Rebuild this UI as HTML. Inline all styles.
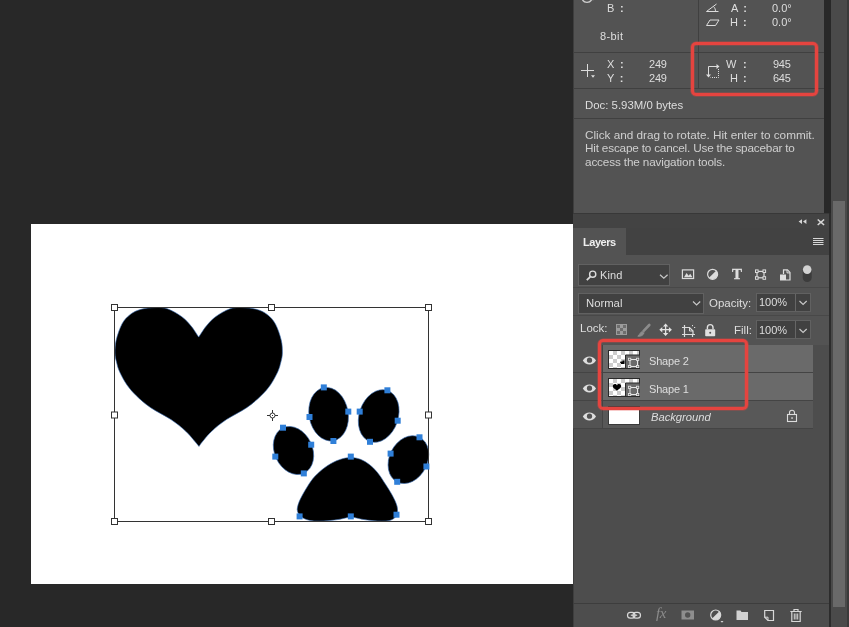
<!DOCTYPE html>
<html lang="en">
<head>
<meta charset="utf-8">
<title>Photoshop - Layers</title>
<style>
*{box-sizing:border-box;margin:0;padding:0}
html,body{width:849px;height:627px;overflow:hidden;background:#282828}
body{position:relative;font-family:"Liberation Sans",sans-serif;font-size:11px;color:#dcdcdc}
.abs{position:absolute}
.t{position:absolute;white-space:nowrap;line-height:13px;height:13px;color:#dedede;margin-top:1px;will-change:transform}
.hl{position:absolute;height:1px;background:#404040}
.vl{position:absolute;width:1px;background:#404040}
#canvas{left:31px;top:224px;width:542px;height:360px;background:#fff}
#info{left:573px;top:0;width:251px;height:213px;background:#535353;box-shadow:inset 1px 0 0 #3e3e3e}
#layers{left:573px;top:213px;width:257px;height:414px;background:#4d4d4d;box-shadow:inset 1px 0 0 #3e3e3e}
.red{position:absolute;z-index:5;border:3px solid #e5443f;border-radius:5px;box-shadow:0 0 0 .6px rgba(229,68,63,.55),inset 0 0 0 .5px rgba(229,68,63,.5)}
.field{position:absolute;background:#414141;border:1px solid #616161}
.row{position:absolute;left:30px;width:210px;height:27px}
.sel{background:#6a6a6a}
</style>
</head>
<body>

<!-- document canvas -->
<div id="canvas" class="abs"></div>
<svg class="abs" style="left:0;top:0" width="573" height="627" viewBox="0 0 573 627">
  <g fill="#000" stroke="#3b6fb5" stroke-width="0.6">
    <path id="heart" d="M198.6 337.0C197.4 335.2 194.1 329.7 191.3 326.3C188.5 322.9 185.8 319.6 181.8 316.7C177.8 313.8 171.9 310.3 167.4 308.8C162.9 307.3 159.4 307.5 155.0 307.6C150.6 307.7 145.1 308.2 141.0 309.3C136.9 310.4 133.5 312.0 130.3 314.4C127.1 316.8 124.3 319.6 122.0 323.9C119.7 328.2 117.4 335.1 116.2 340.0C115.0 344.9 115.0 349.3 115.0 353.0C115.0 356.7 115.7 358.9 116.5 362.0C117.3 365.1 117.8 368.0 119.6 371.8C121.3 375.6 124.2 381.0 127.0 385.0C129.8 389.0 132.4 391.9 136.3 395.7C140.2 399.5 144.9 403.7 150.7 407.7C156.5 411.7 165.1 415.6 171.0 419.6C176.9 423.6 181.3 427.1 186.0 431.6C190.7 436.1 196.8 443.9 199.0 446.4C200.6 443.9 206.7 436.1 211.4 431.6C216.1 427.1 220.5 423.6 226.4 419.6C232.3 415.6 240.9 411.7 246.7 407.7C252.5 403.7 257.1 399.5 261.1 395.7C265.0 391.9 267.6 389.0 270.4 385.0C273.2 381.0 276.0 375.6 277.8 371.8C279.5 368.0 280.1 365.1 280.9 362.0C281.7 358.9 282.3 356.7 282.4 353.0C282.4 349.3 282.4 344.9 281.2 340.0C280.0 335.1 277.8 328.2 275.4 323.9C273.0 319.6 270.3 316.8 267.1 314.4C263.9 312.0 260.5 310.4 256.4 309.3C252.3 308.2 246.8 307.7 242.4 307.6C238.0 307.5 234.5 307.3 230.0 308.8C225.5 310.3 219.6 313.8 215.6 316.7C211.6 319.6 208.9 322.9 206.1 326.3C203.3 329.7 200.0 335.2 198.8 337.0Z"/>
    <ellipse cx="293.5" cy="450.5" rx="19" ry="25" transform="rotate(-25 293.5 450.5)"/>
    <ellipse cx="328.6" cy="414.2" rx="19.6" ry="27" transform="rotate(-10 328.6 414.2)"/>
    <ellipse cx="378.7" cy="416" rx="19.5" ry="27" transform="rotate(18.7 378.7 416)"/>
    <ellipse cx="408.4" cy="459.6" rx="19" ry="25" transform="rotate(26.6 408.4 459.6)"/>
    <path id="pad" d="M351 457.5C364 457.5 376 468 384 482C390 491 395 499 397 506C399 514 396 520.5 386 521C374 521.5 360 519.5 351 516.5C342 519.5 328 521.5 314 521C303 520.5 295.500 514 297.500 507C299 500 304 492 309 484C318 470 336 457.500 351 457.500Z"/>
  </g>
  <!-- transform box -->
  <rect x="114.5" y="307.5" width="314" height="214" fill="none" stroke="#333" stroke-width="1"/>
  <g fill="#fff" stroke="#333" stroke-width="1">
    <rect x="111.5" y="304.5" width="6" height="6"/>
    <rect x="268.5" y="304.5" width="6" height="6"/>
    <rect x="425.5" y="304.5" width="6" height="6"/>
    <rect x="111.5" y="412" width="6" height="6"/>
    <rect x="425.5" y="412" width="6" height="6"/>
    <rect x="111.5" y="518.5" width="6" height="6"/>
    <rect x="268.5" y="518.5" width="6" height="6"/>
    <rect x="425.5" y="518.5" width="6" height="6"/>
  </g>
  <!-- anchor points -->
  <g fill="#2f7fd8">
    <rect x="280" y="424.7" width="6" height="6"/><rect x="308.2" y="441.7" width="6" height="6"/><rect x="300.8" y="470.4" width="6" height="6"/><rect x="272.3" y="453.6" width="6" height="6"/>
    <rect x="320.8" y="384.4" width="6" height="6"/><rect x="345.3" y="408.6" width="6" height="6"/><rect x="330.4" y="438" width="6" height="6"/><rect x="306.5" y="414" width="6" height="6"/>
    <rect x="384.4" y="387.3" width="6" height="6"/><rect x="394.7" y="417.7" width="6" height="6"/><rect x="367" y="438.8" width="6" height="6"/><rect x="356.7" y="408.6" width="6" height="6"/>
    <rect x="416.5" y="434.3" width="6" height="6"/><rect x="423.4" y="463.5" width="6" height="6"/><rect x="394.2" y="478.8" width="6" height="6"/><rect x="387.6" y="450.6" width="6" height="6"/>
    <rect x="347.8" y="453.6" width="6" height="6"/><rect x="296.6" y="513.4" width="6" height="6"/><rect x="347.8" y="513.4" width="6" height="6"/><rect x="393.5" y="511.7" width="6" height="6"/>
  </g>
  <!-- centre reference point -->
  <g stroke="#333" stroke-width="1" fill="none">
    <circle cx="272.5" cy="415.5" r="2.5"/><rect x="272" y="415" width="1" height="1" fill="#333" stroke="none"/>
    <path d="M272.5 410v3M272.5 418v3M267 415.5h3M275 415.5h3"/>
  </g>
</svg>

<!-- INFO PANEL -->
<div id="info" class="abs">
  <div class="vl" style="left:125px;top:0;height:89px"></div>
  <div class="hl" style="left:0;top:52px;width:251px"></div>
  <div class="hl" style="left:0;top:88px;width:251px"></div>
  <div class="hl" style="left:0;top:118px;width:251px"></div>

  <div class="t" style="left:34px;top:1px;word-spacing:2.5px">B <b>:</b></div>
  <div class="t" style="left:27px;top:29px;letter-spacing:0.4px">8-bit</div>
  <div class="t" style="left:158px;top:1px;word-spacing:2.5px">A <b>:</b></div>
  <div class="t" style="left:199px;top:1px">0.0°</div>
  <div class="t" style="left:157px;top:15px;word-spacing:2px">H <b>:</b></div>
  <div class="t" style="left:199px;top:15px">0.0°</div>

  <div class="t" style="left:33.5px;top:57px;word-spacing:2.5px">X <b>:</b></div>
  <div class="t" style="left:75.5px;top:57px;letter-spacing:-0.2px">249</div>
  <div class="t" style="left:33.5px;top:71px;word-spacing:2.5px">Y <b>:</b></div>
  <div class="t" style="left:75.5px;top:71px;letter-spacing:-0.2px">249</div>

  <div class="t" style="left:153px;top:57px;word-spacing:3.5px">W <b>:</b></div>
  <div class="t" style="left:200px;top:57px;letter-spacing:-0.3px">945</div>
  <div class="t" style="left:157px;top:71px;word-spacing:2px">H <b>:</b></div>
  <div class="t" style="left:200px;top:71px;letter-spacing:-0.3px">645</div>

  <div class="t" style="left:11.5px;top:98px;font-size:11.4px">Doc: 5.93M/0 bytes</div>
  <div class="t" style="left:11.5px;top:127px;font-size:11.75px;color:#cfcfcf">Click and drag to rotate. Hit enter to commit.</div>
  <div class="t" style="left:11.5px;top:140.300px;font-size:11.75px;letter-spacing:-0.19px;color:#cfcfcf">Hit escape to cancel. Use the spacebar to</div>
  <div class="t" style="left:11.5px;top:154px;font-size:11.75px;letter-spacing:-0.15px;color:#cfcfcf">access the navigation tools.</div>

  <svg class="abs" style="left:0;top:0" width="251" height="100" viewBox="573 0 251 100" fill="none" stroke="#dcdcdc" stroke-width="1">
    <!-- crosshair -->
    <path d="M587.5 64v13M581 70.500h13"/>
    <path d="M591 75.300h4l-2 2.500z" fill="#dcdcdc" stroke="none"/>
    <path d="M582.500 0a5.500 5.500 0 0 0 9 0M592.500 0l1.500-1.500" stroke="#cfcfcf" stroke-width="1.400" fill="none"/>
    <!-- angle icon -->
    <path d="M706.500 11.500h12M706.500 11.500l10-7.500M713.500 6.500c1.500 1.500 2 3 2 5"/>
    <!-- skew icon -->
    <path d="M706.500 25.500h9l3.500-5.500h-9z"/>
    <!-- transform icon -->
    <path d="M708.500 75v-8.500h8.500" />
    <path d="M716.500 64l3 2.500-3 2.500zM706 74.500h5l-2.500 3z" fill="#dcdcdc" stroke="none"/>
    <path d="M718.500 69v8.500h-8" stroke-dasharray="1 1"/>
  </svg>
</div>
<div class="red" style="left:691px;top:42px;width:127px;height:54px"></div>

<!-- LAYERS PANEL -->
<div id="layers" class="abs">
  <!-- top strip + tab bar -->
  <div class="abs" style="left:0;top:0;width:256px;height:15px;background:#434343"></div>
  <div class="hl" style="left:0;top:0;width:257px;background:#383838"></div>
  <div class="abs" style="left:0;top:15px;width:256px;height:27px;background:#424242"></div>
  <div class="abs" style="left:0;top:15px;width:53px;height:27px;background:#535353"></div>
  <div class="abs" style="left:0;top:42px;width:256px;height:90px;background:#535353"></div>
  <div class="t" style="left:10px;top:22px;font-weight:bold;font-size:11px;letter-spacing:-0.45px;color:#f0f0f0">Layers</div>

  <!-- kind row -->
  <div class="field" style="left:5px;top:51px;width:92px;height:22px"></div>
  <div class="t" style="left:26.5px;top:55px;letter-spacing:0.1px">Kind</div>
  <!-- blend row -->
  <div class="hl" style="left:0;top:74px;width:256px;background:#484848"></div>
  <div class="field" style="left:5px;top:80px;width:126px;height:21px"></div>
  <div class="t" style="left:12.5px;top:83px;font-size:11.3px">Normal</div>
  <div class="t" style="left:136px;top:82.500px;font-size:11.5px">Opacity:</div>
  <div class="field" style="left:183px;top:80px;width:55px;height:19px"></div>
  <div class="vl" style="left:222px;top:81px;height:17px;background:#666"></div>
  <div class="t" style="left:186px;top:82px">100%</div>
  <div class="hl" style="left:0;top:102px;width:256px;background:#484848"></div>
  <!-- lock row -->
  <div class="t" style="left:6.5px;top:108px;font-size:11.5px">Lock:</div>
  <div class="t" style="left:160.5px;top:109.500px;font-size:11.500px">Fill:</div>
  <div class="field" style="left:183px;top:107px;width:55px;height:19px"></div>
  <div class="vl" style="left:222px;top:108px;height:17px;background:#666"></div>
  <div class="t" style="left:186px;top:110px">100%</div>

  <!-- layer rows -->
  <div class="abs" style="left:0;top:131px;width:240px;height:85px;background:#535353"></div>
  <div class="row sel" style="top:132px"></div>
  <div class="row sel" style="top:160px"></div>
  <div class="row" style="top:188px;background:#585858"></div>
  <div class="hl" style="left:0;top:159px;width:240px;background:#444"></div>
  <div class="hl" style="left:0;top:187px;width:240px;background:#444"></div>
  <div class="hl" style="left:0;top:215px;width:240px;background:#444"></div>
  <div class="vl" style="left:29px;top:132px;height:84px;background:#444"></div>

  <div class="t" style="left:75.5px;top:141px;letter-spacing:-0.2px">Shape 2</div>
  <div class="t" style="left:75.5px;top:169px;letter-spacing:-0.2px">Shape 1</div>
  <div class="t" style="left:77.500px;top:197px;font-style:italic;font-size:11.2px">Background</div>

  <!-- bottom toolbar -->
  <div class="hl" style="left:0;top:390px;width:256px;background:#3d3d3d"></div>
</div>
<div class="red" style="left:598px;top:339px;width:150px;height:71px"></div>

<!-- right dark strip + scrollbar column -->
<div class="abs" style="left:824px;top:0;width:7px;height:213px;background:#282828"></div>
<div class="abs" style="left:829px;top:213px;width:2px;height:414px;background:#2c2c2c"></div>
<div class="abs" style="left:831px;top:0;width:18px;height:627px;background:#4a4a4a"></div>
<div class="abs" style="left:847px;top:0;width:2px;height:627px;background:#3a3a3a"></div>
<div class="abs" style="left:833px;top:201px;width:12px;height:406px;background:#696969"></div>


<!-- ICON OVERLAY (page coordinates) -->
<svg class="abs" style="left:0;top:0;pointer-events:none" width="849" height="627" viewBox="0 0 849 627" fill="none">
  <!-- collapse / close / menu -->
  <g fill="#d6d6d6">
    <path d="M802 219.200v4.800l-3.400-2.400zM806.400 219.200v4.800l-3.400-2.400z"/>
    <path d="M818.200 219l2.700 2.200 2.700-2.200 1 1-2.500 2.200 2.500 2.200-1 1-2.700-2.200-2.700 2.200-1-1 2.500-2.200-2.500-2.200z"/>
    <rect x="813" y="238" width="10.500" height="1"/><rect x="813" y="240" width="10.500" height="1"/><rect x="813" y="242" width="10.500" height="1"/><rect x="813" y="244" width="10.500" height="1"/>
  </g>
  <!-- kind: magnifier + chevron -->
  <g stroke="#dcdcdc" stroke-width="1.400">
    <circle cx="592.700" cy="274.200" r="3.100"/>
    <path d="M590.400 276.600l-3.600 3.600" stroke-width="1.800"/>
  </g>
  <path d="M660 274.800l3.800 3.500 3.800-3.500" stroke="#c8c8c8" stroke-width="1.200"/>
  <!-- filter icons -->
  <g stroke="#dcdcdc" stroke-width="1.200">
    <rect x="682.400" y="269.900" width="11.200" height="8.600"/>
    <path d="M684 277.300l2.600-4.300 2 2.800 1.600-2 2.300 3.500z" fill="#dcdcdc" stroke="none"/>
    <circle cx="712.600" cy="274.300" r="5"/>
    <path d="M716.100 270.700a5 5 0 0 1-7.100 7.100z" fill="#dcdcdc" stroke="none"/>
  </g>
  <g stroke="#dcdcdc" stroke-width="1.200">
    <rect x="757" y="271.400" width="7" height="6.400"/>
  </g>
  <g fill="#535353" stroke="#dcdcdc" stroke-width="1">
    <rect x="755.500" y="269.900" width="2.600" height="2.600"/><rect x="763" y="269.900" width="2.600" height="2.600"/><rect x="755.500" y="276.700" width="2.600" height="2.600"/><rect x="763" y="276.700" width="2.600" height="2.600"/>
  </g>
  <!-- smart object -->
  <path d="M783.500 274v-4.100h4l2.500 2.500v7.600h-4" stroke="#dcdcdc" stroke-width="1.200"/>
  <path d="M787 269.900v3h3" stroke="#dcdcdc" stroke-width="1"/>
  <rect x="780" y="274.500" width="6" height="6" fill="#dcdcdc"/>
  <!-- toggle -->
  <rect x="802.700" y="265.500" width="9" height="16.500" rx="4.500" fill="#3c3c3c"/>
  <circle cx="807.200" cy="269.600" r="4.300" fill="#d2d2d2"/>
  <!-- dropdown chevrons -->
  <g stroke="#c8c8c8" stroke-width="1.200">
    <path d="M693 301.500l3.600 3.400 3.600-3.400"/>
    <path d="M799.500 301l3.600 3.400 3.600-3.400"/>
    <path d="M799.500 329l3.600 3.400 3.600-3.400"/>
  </g>
  <!-- lock: transparent pixels -->
  <g>
    <rect x="616" y="324" width="11" height="11" fill="#6e6e6e"/>
    <g fill="#9c9c9c">
      <rect x="616" y="324" width="11" height="1"/><rect x="616" y="334" width="11" height="1"/><rect x="616" y="324" width="1" height="11"/><rect x="626" y="324" width="1" height="11"/>
      <rect x="620" y="325" width="3" height="3"/><rect x="617" y="328" width="3" height="3"/><rect x="623" y="328" width="3" height="3"/><rect x="620" y="331" width="3" height="3"/>
    </g>
  </g>
  <!-- lock: brush (dim) -->
  <g stroke="#8c8c8c" stroke-linecap="round">
    <path d="M649.300 325l-5.600 5.800" stroke-width="2.600"/>
    <path d="M642.200 331.400c-1.800.800-2.400 3-4.400 4.800 3 .400 5.400-.800 6.200-3.200z" fill="#8c8c8c" stroke-width="1"/>
  </g>
  <!-- lock: move -->
  <g stroke="#e2e2e2" stroke-width="1.300">
    <path d="M665.600 325.500v8.400M661.400 329.700h8.400"/>
  </g>
  <path d="M665.600 323.400l2.700 3h-5.400zM665.600 336l2.700-3h-5.400zM659.300 329.700l3-2.700v5.400zM671.900 329.700l-3-2.700v5.400z" fill="#e2e2e2"/>
  <!-- lock: artboard -->
  <g stroke="#dcdcdc" stroke-width="1.200">
    <path d="M684.500 325v12M682 327.500h7.500l3.500 3.500v3.500M682 334.500h13M692.500 334.500v2.500"/>
    <path d="M689.500 327.500v3.500h3.500" stroke-width="1"/>
    <path d="M692.500 325v1.200M694 327.500h1.200" stroke-width="1"/>
  </g>
  <!-- lock: lock all -->
  <rect x="705.200" y="329.200" width="10" height="7" rx=".800" fill="#e0e0e0"/>
  <path d="M707.400 329.200v-1.800a2.800 2.800 0 0 1 5.600 0v1.800" stroke="#e0e0e0" stroke-width="1.400"/>
  <circle cx="710.200" cy="332.700" r="1" fill="#535353"/>
  <!-- eyes -->
  <g id="eyes">
    <path d="M582.800 360.500c3-5.200 10.200-5.200 13.200 0-3 5.200-10.200 5.200-13.200 0z" fill="#dedede"/>
    <circle cx="589.500" cy="360.200" r="2.600" fill="#535353"/>
    <path d="M582.800 388.500c3-5.200 10.200-5.200 13.200 0-3 5.200-10.200 5.200-13.200 0z" fill="#dedede"/>
    <circle cx="589.500" cy="388.200" r="2.600" fill="#535353"/>
    <path d="M582.800 416.500c3-5.200 10.200-5.200 13.200 0-3 5.200-10.200 5.200-13.200 0z" fill="#dedede"/>
    <circle cx="589.500" cy="416.200" r="2.600" fill="#535353"/>
  </g>
  <!-- thumbnails -->
  <defs>
    <pattern id="chk" x="609" y="351" width="8" height="8" patternUnits="userSpaceOnUse">
      <rect width="8" height="8" fill="#fff"/><rect x="4" width="4" height="4" fill="#ccc"/><rect y="4" width="4" height="4" fill="#ccc"/>
    </pattern>
    <g id="vmask">
      <rect x="625.500" y="355" width="14" height="13" fill="#6a6a6a"/>
      <path d="M625.500 368.500v-13.500h14.500" stroke="#2a2a2a" stroke-width="1"/>
      <rect x="630" y="359.500" width="7.500" height="7" stroke="#e6e6e6" stroke-width="1"/>
      <g fill="#6a6a6a" stroke="#e6e6e6" stroke-width=".800">
        <rect x="628.600" y="358.200" width="2.200" height="2.200"/><rect x="636.600" y="358.200" width="2.200" height="2.200"/><rect x="628.600" y="365.400" width="2.200" height="2.200"/><rect x="636.600" y="365.400" width="2.200" height="2.200"/>
      </g>
    </g>
  </defs>
  <rect x="608.500" y="350.500" width="31" height="18" fill="url(#chk)" stroke="#2a2a2a"/>
  <use href="#vmask"/>
  <path d="M620.500 361.500h2v-1h2v3.500h-3.500v-1h-1z" fill="#000"/>
  <g transform="translate(0 28)">
    <rect x="608.500" y="350.500" width="31" height="18" fill="url(#chk)" stroke="#2a2a2a"/>
    <use href="#vmask"/>
    <path d="M617 357.400c-.900-2-4.200-1.700-4.200.800 0 1.800 2.400 2.800 4.200 4.600 1.800-1.800 4.200-2.800 4.200-4.600 0-2.500-3.300-2.800-4.200-.800z" fill="#000"/>
  </g>
  <rect x="608.500" y="406.500" width="31" height="18" fill="#fff" stroke="#3a3a3a"/>
  <!-- background lock -->
  <rect x="787.500" y="414.500" width="9" height="7" stroke="#dcdcdc" stroke-width="1.100"/>
  <path d="M789.500 414.500v-1.800a2.500 2.500 0 0 1 5 0v1.800" stroke="#dcdcdc" stroke-width="1.100"/>
  <rect x="791.300" y="417.300" width="1.500" height="1.500" fill="#dcdcdc"/>

  <!-- bottom toolbar icons -->
  <g stroke="#d8d8d8" stroke-width="1.200">
    <rect x="627.500" y="612.300" width="7.500" height="5.800" rx="2.900"/>
    <rect x="633" y="612.300" width="7.500" height="5.800" rx="2.900"/>
    <path d="M630.800 615.200h6.400"/>
  </g>
  <rect x="681.500" y="610.500" width="12.500" height="9" fill="#8e8e8e"/>
  <circle cx="687.700" cy="615" r="2.700" fill="#535353"/>
  <circle cx="715.700" cy="615" r="5" stroke="#d8d8d8" stroke-width="1.200"/>
  <path d="M719.200 611.400a5 5 0 0 1-7.100 7.100z" fill="#d8d8d8"/>
  <path d="M720.500 621h3l-1.500 1.700z" fill="#d8d8d8"/>
  <path d="M736.500 610.500h4l1 1.500h6.500v8h-11.500z" fill="#d2d2d2"/>
  <path d="M764.700 610.500h8.800v10h-5.500l-3.300-3.300z" stroke="#d8d8d8" stroke-width="1.200"/>
  <path d="M764.700 617.200h3.300v3.300" stroke="#d8d8d8" stroke-width="1"/>
  <g stroke="#d8d8d8" stroke-width="1.200">
    <path d="M790.300 611.500h11.400M794 611.300v-1.800h4v1.800"/>
    <path d="M791.800 612v9.500h8.400v-9.500"/>
    <path d="M794.300 613.500v6M796 613.500v6M797.700 613.500v6" stroke-width="1"/>
  </g>
</svg>
<div class="t" style="left:656px;top:605px;font-style:italic;font-size:15px;color:#8c8c8c;font-family:'Liberation Serif',serif;letter-spacing:-0.5px;line-height:15px;height:15px">fx</div>
<div class="t" style="left:731.500px;top:265.500px;font-family:'Liberation Serif',serif;font-weight:bold;font-size:15px;line-height:15px;height:15px;color:#dedede;-webkit-text-stroke:.4px #dedede">T</div>

</body>
</html>
